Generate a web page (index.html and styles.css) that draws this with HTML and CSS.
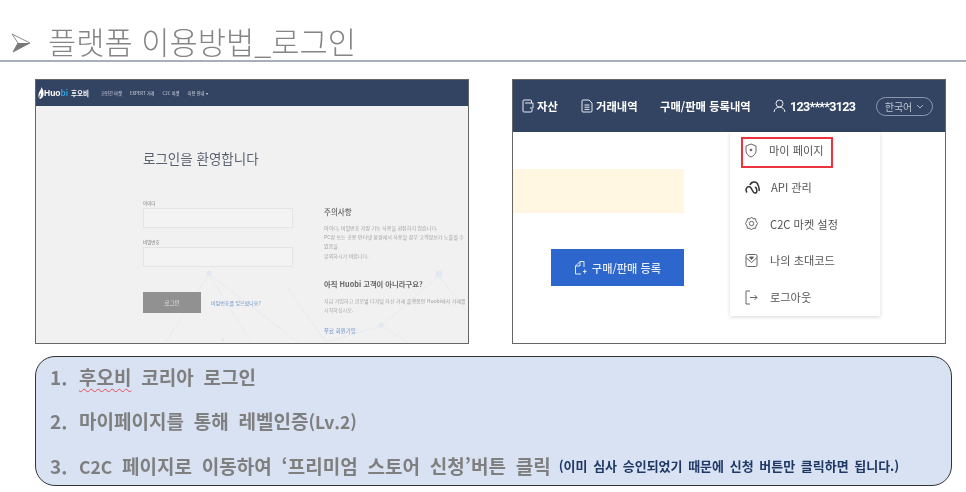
FILE: index.html
```html
<!DOCTYPE html>
<html lang="ko">
<head>
<meta charset="utf-8">
<title>플랫폼 이용방법_로그인</title>
<link rel="stylesheet" href="styles.css">
</head>
<body>
<header class="title-bar">
  <svg class="title-arrow" width="18" height="20" viewBox="0 0 18 20"><path d="M0 1 L18 10 L1 19 L6 10 Z" fill="#fff" stroke="#8a8a8a" stroke-width="1"/><path d="M1 19 L18 10 L6 10 Z" fill="#777"/></svg>
  <h1 class="title">플랫폼 이용방법_로그인</h1>
</header>
<main class="shots">
  <section class="shot shot-login">
    <div class="login-nav">
      <span class="logo"><svg width="6" height="12" viewBox="0 0 6 12"><path d="M3.5 0 C5 3 6 5 5.5 8 C5 10.500 3 12 1.500 12 C2.500 10 2.800 8 2.800 6 C1.800 7.500 1 9 1.500 12 C0 10 0 7 1.500 4.500 C2.500 3 3.300 2 3.500 0 Z" fill="#fff"/></svg><span>Huo</span><span class="logo-bi">bi</span><span class="logo-ko">후오비</span></span>
      <span class="nav-link">코인간 마켓</span>
      <span class="nav-link">EXPERT 거래</span>
      <span class="nav-link">C2C 마켓</span>
      <span class="nav-link">이용 안내 ▾</span>
    </div>
    <div class="login-body">
      <svg class="net" width="432" height="237" viewBox="0 0 432 237"><g stroke="#e3e6ee" stroke-width="0.6" fill="none"><path d="M173 168 L215 236 M173 168 L262 236 M173 168 L130 236 M403 170 L345 220 L290 236 M403 170 L430 205 M345 220 L372 236 M290 236 L250 180"/></g><g fill="#e2e7f3"><circle cx="173" cy="167" r="2.500"/><circle cx="403" cy="168" r="3.500"/><circle cx="345" cy="219" r="2.500"/><circle cx="290" cy="225" r="2"/><circle cx="187" cy="234" r="1.500"/></g></svg>
      <h2 class="login-title">로그인을 환영합니다</h2>
      <div class="login-cols">
        <div class="login-form">
          <label class="field-label">아이디</label>
          <div class="input"></div>
          <label class="field-label field-label-2">비밀번호</label>
          <div class="input"></div>
          <div class="login-actions">
            <span class="login-btn">로그인</span>
            <span class="forgot">비밀번호를 잊으셨나요?</span>
          </div>
        </div>
        <div class="login-notes">
          <h3 class="note-head">주의사항</h3>
          <p class="note-text">아이디, 비밀번호 저장 기능 사용을 권장하지 않습니다.<br>PC방 또는 공용 인터넷 환경에서 사용할 경우 고객정보가 노출될 수<br>있음을<br>유의하시기 바랍니다.</p>
          <h3 class="note-head note-head-2">아직 Huobi 고객이 아니라구요?</h3>
          <p class="note-text">지금 가입하고 글로벌 디지털 자산 거래 플랫폼인 Huobi에서 거래를<br>시작하십시오.</p>
          <span class="signup">무료 회원가입</span>
        </div>
      </div>
    </div>
  </section>
  <section class="shot shot-menu">
    <div class="menu-nav">
      <span class="nav-item nav-a"><svg width="12" height="14" viewBox="0 0 12 14" class="ico-w"><path d="M9.500 4 V2 a1 1 0 0 0 -1 -1 H2 a1 1 0 0 0 -1 1 V12 a1 1 0 0 0 1 1 H9 a1 1 0 0 0 1 -1 V10 M3 4 H11 V9 H8"/></svg>자산</span>
      <span class="nav-item nav-b"><svg width="12" height="14" viewBox="0 0 12 14" class="ico-w"><path d="M1 2 a1 1 0 0 1 1 -1 H8 L11 4 V12 a1 1 0 0 1 -1 1 H2 a1 1 0 0 1 -1 -1 Z M3.500 6 H8.500 M3.500 8.200 H8.500 M3.500 10.400 H8.500"/></svg>거래내역</span>
      <span class="nav-item nav-c">구매/판매 등록내역</span>
      <span class="nav-item nav-d"><svg width="13" height="14" viewBox="0 0 13 14" class="ico-w"><circle cx="6.500" cy="4.500" r="3.500"/><path d="M1 13 C1.500 9.500 4 8.200 6.500 8.200 C9 8.200 11.500 9.500 12 13"/></svg><span class="user-id">123****3123</span></span>
      <span class="lang">한국어 <svg width="8" height="5" viewBox="0 0 8 5" class="ico-lang"><path d="M1 1 L4 4 L7 1"/></svg></span>
    </div>
    <div class="menu-body">
      <div class="menu-left">
        <div class="notice"></div>
        <div class="register-row">
          <span class="register"><svg width="13" height="15" viewBox="0 0 13 15" class="ico-w"><path d="M7 14 H1.500 V6 L6 1.500 H10 V7 M9 11.500 H12.500 M10.700 9.500 V13.500"/><path d="M6 1.500 V6 H1.500"/></svg>구매/판매 등록</span>
        </div>
      </div>
      <ul class="dropdown">
        <li class="drop-item active"><svg width="12" height="15" viewBox="0 0 12 15" class="ico-g"><path d="M6 1 L11 3 V8 C11 11 8.500 13 6 14 C3.500 13 1 11 1 8 V3 Z"/><circle cx="6" cy="7" r="0.900" fill="#555"/></svg><span>마이 페이지</span></li>
        <li class="drop-item"><svg width="16" height="15" viewBox="0 0 16 15" class="ico-k"><path d="M2 12.500 C0 10 1.500 6.500 4 6.500 C7 6.500 7 13 10 13 C12.500 13 12.500 8 10 7 M5 5 C6.500 1 12 1 13 5 C14 7 14.500 9 14 11"/></svg><span class="api">API 관리</span></li>
        <li class="drop-item"><svg width="13" height="15" viewBox="0 0 13 15" class="ico-g"><path d="M6.500 1 L8 2.800 L10.500 2.600 L11 5 L12.500 7.500 L11 10 L10.500 12.400 L8 12.200 L6.500 14 L5 12.200 L2.500 12.400 L2 10 L0.500 7.500 L2 5 L2.500 2.600 L5 2.800 Z"/><circle cx="6.500" cy="7.500" r="2.200"/></svg><span>C2C 마켓 설정</span></li>
        <li class="drop-item"><svg width="13" height="15" viewBox="0 0 13 15" class="ico-g"><path d="M1 3 a1.500 1.500 0 0 1 1.500 -1.500 H10.500 A1.500 1.500 0 0 1 12 3 V12 a1.500 1.500 0 0 1 -1.500 1.500 H2.500 A1.500 1.500 0 0 1 1 12 Z M1 4.500 L6.500 9.500 L12 4.500"/><path d="M4.500 4 H8.500 L6.500 6.500 Z" fill="#555"/></svg><span>나의 초대코드</span></li>
        <li class="drop-item"><svg width="13" height="15" viewBox="0 0 13 15" class="ico-g"><path d="M5 1 H1 V14 H5 M5 7.500 H12 M9.500 5 L12 7.500 L9.500 10"/></svg><span>로그아웃</span></li>
      </ul>
    </div>
  </section>
</main>
<section class="steps">
  <p class="step"><span class="num">1.</span><span><span class="squiggle">후오비</span> 코리아 로그인</span></p>
  <p class="step"><span class="num">2.</span><span>마이페이지를 통해 레벨인증<span class="latin">(Lv.2)</span></span></p>
  <p class="step"><span class="num">3.</span><span><span class="latin">C2C</span> 페이지로 이동하여 ‘프리미엄 스토어 신청’버튼 클릭</span><span class="aside">(이미 심사 승인되었기 때문에 신청 버튼만 클릭하면 됩니다.)</span></p>
</section>
</body>
</html>
```
FILE: styles.css
```css
* { box-sizing: border-box; }
html, body { margin: 0; padding: 0; }
body {
  width: 966px;
  height: 492px;
  overflow: hidden;
  background: #fff;
  font-family: "Noto Sans CJK KR", "Noto Sans", sans-serif;
}
.title-bar {
  height: 62px;
  padding: 23px 0 0 12px;
  display: flex;
  align-items: flex-start;
  border-bottom: 2px solid #a9aebc;
}
.title-arrow { margin-top: 10px; }
.title {
  margin: 0 0 0 18px;
  font-size: 30.700px;
  line-height: 36px;
  font-weight: 300;
  color: #858585;
  letter-spacing: 0;
  filter: blur(0.4px);
}
.shots {
  display: flex;
  gap: 43px;
  padding: 17px 0 0 35px;
}
.shot {
  width: 434px;
  height: 265px;
  border: 1px solid #666;
  overflow: hidden;
  display: flex;
  flex-direction: column;
  filter: blur(0.3px);
}
.login-nav {
  height: 26px;
  flex: none;
  background: #334362;
  display: flex;
  align-items: center;
  padding-left: 2px;
  color: #d5dae4;
  font-size: 4.300px;
}
.logo {
  display: flex;
  align-items: center;
  font-size: 8.500px;
  font-weight: 700;
  color: #fff;
  width: 63px;
  flex: none;
  white-space: nowrap;
  font-family: "Liberation Sans", "Noto Sans CJK KR", sans-serif;
}
.logo-bi { color: #2f9fe0; }
.logo-ko { margin-left: 3px; font-size: 6.500px; font-family: "Noto Sans CJK KR", sans-serif; }
.nav-link { margin-right: 8px; white-space: nowrap; }
.login-body {
  position: relative;
  flex: 1;
  background: #f1f1f2;
  padding: 42px 0 0 107px;
}
.net { position: absolute; left: 0; top: 0; }
.login-title {
  position: relative;
  margin: 0;
  font-size: 13.500px;
  line-height: 20px;
  font-weight: 400;
  color: #5a6270;
}
.login-cols {
  position: relative;
  display: flex;
  gap: 31px;
  margin-top: 32px;
}
.login-form { width: 150px; flex: none; }
.field-label {
  display: block;
  font-size: 4.500px;
  line-height: 6px;
  color: #777;
}
.field-label-2 { margin-top: 11px; }
.input {
  height: 20px;
  margin-top: 2px;
  border: 1px solid #e4e4e6;
  background: #f3f3f4;
}
.login-actions {
  display: flex;
  align-items: center;
  gap: 10px;
  margin-top: 25px;
}
.login-btn {
  width: 58px;
  height: 21px;
  background: #919191;
  color: #e4e4e4;
  font-size: 5.500px;
  display: flex;
  align-items: center;
  justify-content: center;
}
.forgot { font-size: 5px; color: #6e94c9; white-space: nowrap; }
.login-notes { width: 143px; padding-top: 6px; white-space: nowrap; }
.note-head {
  margin: 0;
  font-size: 7.500px;
  line-height: 11px;
  font-weight: 500;
  color: #666;
}
.note-head-2 { margin-top: 19px; font-size: 7.300px; font-weight: 700; }
.note-text {
  margin: 6px 0 0;
  font-size: 5.050px;
  line-height: 9.200px;
  color: #a4a4a6;
}
.signup {
  display: block;
  margin-top: 13px;
  font-size: 5.500px;
  line-height: 8px;
  color: #6e94c9;
}
.menu-nav {
  height: 52px;
  flex: none;
  background: #334362;
  display: flex;
  align-items: center;
  color: #fff;
  font-size: 11.300px;
  font-weight: 700;
  white-space: nowrap;
}
.nav-item { display: flex; align-items: center; }
.nav-item svg { margin-right: 3px; }
.nav-a { margin-left: 9px; width: 59px; }
.nav-b { width: 79px; }
.nav-c { width: 113px; }
.nav-d { width: 103px; }
.user-id { font-family: Roboto, sans-serif; font-size: 12.500px; letter-spacing: -0.7px; margin-left: 1px; }
.ico-w { fill: none; stroke: #e8ecf3; stroke-width: 1; }
.ico-g { fill: none; stroke: #666; stroke-width: 1; flex: none; }
.ico-k { fill: none; stroke: #333; stroke-width: 1.500; flex: none; }
.ico-lang { fill: none; stroke: #aab4c6; stroke-width: 1; }
.lang {
  width: 57px;
  height: 19px;
  border: 1px solid #8a97b0;
  border-radius: 10px;
  font-size: 10px;
  font-weight: 400;
  color: #bfc7d6;
  display: flex;
  align-items: center;
  justify-content: center;
  gap: 4px;
}
.menu-body {
  flex: 1;
  display: flex;
  background: #fff;
}
.menu-left { width: 217px; flex: none; padding-top: 37px; }
.notice { width: 171px; height: 44px; background: #fff7e1; }
.register-row { display: flex; padding: 36px 0 0 38px; }
.register {
  width: 133px;
  height: 37px;
  background: #2d66cc;
  color: #e6ecf8;
  font-size: 11.200px;
  font-weight: 500;
  display: flex;
  align-items: center;
  justify-content: center;
  gap: 5px;
}
.dropdown {
  list-style: none;
  margin: 0;
  padding: 0 0 0 11px;
  width: 150px;
  height: 184px;
  background: #fff;
  box-shadow: 0 1px 4px rgba(0, 0, 0, 0.16);
}
.drop-item {
  position: relative;
  height: 36.700px;
  display: flex;
  align-items: center;
  gap: 12px;
  padding-left: 5px;
  font-size: 11.200px;
  color: #555;
  white-space: nowrap;
}
.drop-item .api { margin-left: -2px; }
.drop-item svg { margin-left: -1px; }
.active::after {
  content: "";
  position: absolute;
  left: 0;
  top: 5px;
  width: 88px;
  height: 27px;
  border: 2px solid #ee3340;
}
.steps {
  width: 917px;
  height: 130px;
  margin: 12px 0 0 35px;
  padding: 4px 0 0 14px;
  background: #d9e2f3;
  border: 1.500px solid #333;
  border-radius: 20px;
  display: flex;
  flex-direction: column;
  gap: 14.500px;
}
.step {
  margin: 0;
  height: 30px;
  display: flex;
  align-items: center;
  font-size: 19px;
  font-weight: 700;
  color: #7f7f7f;
  word-spacing: 4.500px;
  white-space: nowrap;
  filter: blur(0.25px);
}
.num { width: 29px; flex: none; }
.latin { font-size: 17.500px; }
.squiggle { text-decoration: underline wavy #ea4a5a 1px; text-underline-offset: 3px; }
.aside {
  margin-left: 8px;
  font-size: 13px;
  color: #1f3864;
  word-spacing: 2px;
}
```
